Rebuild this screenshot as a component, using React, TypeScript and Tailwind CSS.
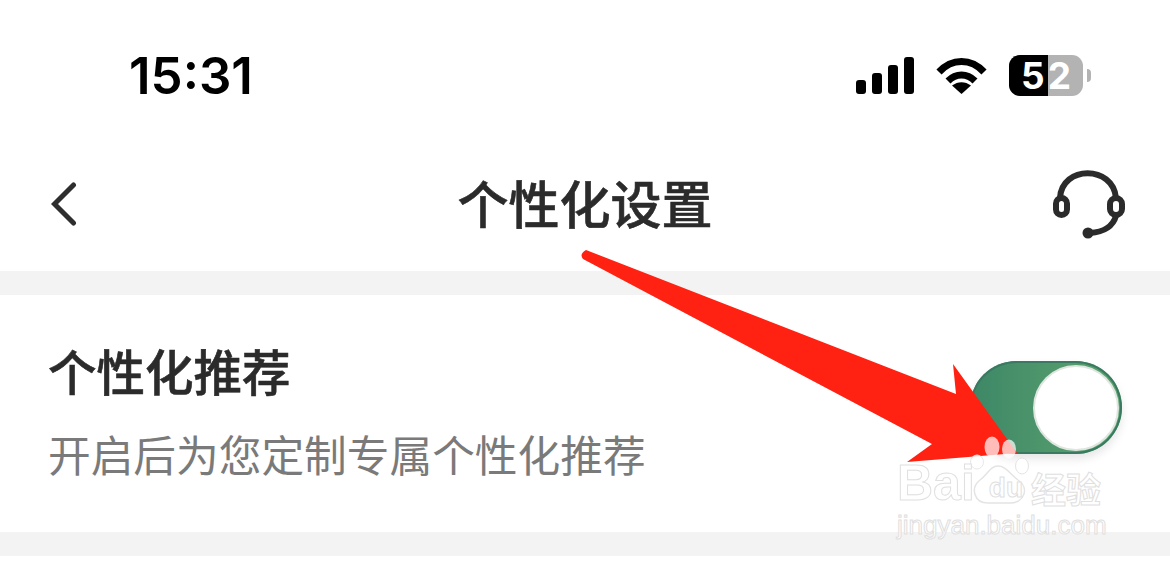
const cjk = "font-['Noto_Sans_CJK_SC','Noto_Sans',sans-serif]";

const SignalIcon = () => (
  <svg width="58" height="37" viewBox="0 0 58 37" fill="#000">
    <rect x="0" y="23" width="10" height="14" rx="3" />
    <rect x="16" y="16" width="10" height="21" rx="3" />
    <rect x="32" y="8" width="10" height="29" rx="3" />
    <rect x="48" y="0" width="10" height="37" rx="3" />
  </svg>
);

const WifiIcon = () => (
  <svg width="51" height="37" viewBox="0 0 51 37" fill="none" stroke="#000" strokeWidth="7">
    <path d="M3 15 C16 1 35 1 48 15" />
    <path d="M12 24 C20 16 31 16 39 24" />
    <path d="M25.5 37 L16 28.5 C22 24 29 24 35 28.5 Z" fill="#000" stroke="none" />
  </svg>
);

const BatteryIcon = () => (
  <div className="flex items-center">
    <div className="relative flex h-[41px] w-[74px] rounded-[11px] bg-[#b3b3b3]">
      <div className="h-full w-[39px] rounded-l-[11px] bg-black" />
      <span className="absolute inset-0 flex items-center justify-center pl-[3px] font-['Inter',sans-serif] text-[37px] font-bold leading-none tracking-[3px] text-white">
        52
      </span>
    </div>
    <div className="ml-1 h-[13px] w-1 rounded-r-full bg-[#b3b3b3]" />
  </div>
);

const BackIcon = () => (
  <svg width="26" height="44" viewBox="0 0 26 44" fill="none" stroke="#2e2e2e" strokeWidth="5" strokeLinecap="round" strokeLinejoin="miter">
    <path d="M22.5 3 L3.5 22 L22.5 41" />
  </svg>
);

const HeadsetIcon = () => (
  <svg width="78" height="74" viewBox="1050 168 78 74" fill="none" stroke="#2b2b2b" strokeWidth="6">
    <path d="M1060 198 C1062 165 1113 165 1116 198" />
    <rect x="1056" y="198" width="11" height="17" rx="5.5" />
    <rect x="1110" y="198" width="12" height="17" rx="6" />
    <path d="M1116 216 C1113 226 1104 232 1090 233" />
    <circle cx="1088" cy="233" r="5.5" fill="#2b2b2b" stroke="none" />
  </svg>
);

const RedArrow = () => (
  <svg className="absolute left-[575px] top-[245px]" width="450" height="225" viewBox="575 245 450 225">
    <path
      d="M586 250 L956 394 L953 364 L1017 453 L907 462 L932 444 L583 259 Q579 254 586 250 Z"
      fill="#ff2112"
    />
  </svg>
);

const Watermark = () => (
  <div className="absolute left-[897px] top-[436px] w-[214px]">
    {/* paw: viewBox is page coordinates so the pads line up with the picture */}
    <svg className="absolute left-[68px] top-0" width="70" height="70" viewBox="965 436 70 70" fill="none">
      <ellipse cx="992" cy="447" rx="7.5" ry="10.5" fill="#fff" fillOpacity="0.7" />
      <ellipse cx="1009" cy="449" rx="7" ry="9.5" fill="#fff" fillOpacity="0.7" />
      <ellipse cx="977" cy="462" rx="6.5" ry="7" fill="#fff" fillOpacity="0.8" stroke="#e8e8e8" />
      <ellipse cx="1022" cy="466" rx="6.5" ry="8" fill="#fff" stroke="#e4e4e4" />
      <path
        d="M998 466 C990 466 988 474 980 480 C970 488 974 503 988 503 C994 503 1002 503 1010 503 C1024 503 1030 488 1018 480 C1010 474 1006 466 998 466 Z"
        fill="#fff"
        stroke="#e4e4e4"
        strokeWidth="1.5"
      />
    </svg>
    <div className="relative mt-[24px] flex h-[46px] items-end whitespace-nowrap text-white [-webkit-text-stroke:1px_#e0e0e0]">
      <span className="font-['Liberation_Sans',sans-serif] text-[50px] font-bold leading-[46px]">Bai</span>
      <span className="mb-[4px] ml-[14px] font-['Liberation_Sans',sans-serif] text-[28px] font-bold leading-none">du</span>
      <span className={`${cjk} mb-[1px] ml-[8px] text-[35px] font-bold leading-none`}>经验</span>
    </div>
    <p className="relative mt-[4px] whitespace-nowrap font-['Liberation_Sans',sans-serif] text-[26px] leading-[30px] text-white [-webkit-text-stroke:1px_#e0e0e0]">
      jingyan.baidu.com
    </p>
  </div>
);

const Toggle = () => (
  <div className="flex h-[93px] w-[152px] items-center justify-end rounded-full bg-[linear-gradient(90deg,#3d8767,#5fa56f)] pr-[3px] shadow-[inset_0_0_0_2px_#3a7a62,0_5px_10px_rgba(0,0,0,0.1)]">
    <div className="h-[86px] w-[86px] rounded-full border-2 border-[#dfe5df] bg-white" />
  </div>
);

export default function App() {
  return (
    <div className={`${cjk} relative h-[562px] w-[1170px] overflow-hidden bg-white`}>
      <div className="flex h-[151px] items-start justify-between pl-[129px] pr-[79px] pt-[55px]">
        <span className="font-['Inter',sans-serif] text-[51px] font-semibold leading-[41px] text-black">15:31</span>
        <div className="flex items-center">
          <SignalIcon />
          <div className="ml-[22px]"><WifiIcon /></div>
          <div className="ml-[22px]"><BatteryIcon /></div>
        </div>
      </div>

      <header className="grid h-[120px] grid-cols-[1fr_auto_1fr] items-start px-[51px]">
        <div className="pt-[31px]"><BackIcon /></div>
        <h1 className="pt-[16px] text-[51px] font-medium leading-[70px] text-[#2b2b2b] [-webkit-text-stroke:0.6px_#2b2b2b]">个性化设置</h1>
        <div className="-mr-[9px] flex justify-end pt-[17px]"><HeadsetIcon /></div>
      </header>

      <div className="h-6 bg-[#f3f3f3]" />

      <section className="flex h-[237px] items-start justify-between pl-[48px] pr-[48px]">
        <div className="pt-[40px]">
          <h2 className="text-[48.5px] font-medium leading-[70px] text-[#2b2b2b] [-webkit-text-stroke:0.6px_#2b2b2b]">个性化推荐</h2>
          <p className="mt-[18px] text-[42.7px] leading-[60px] text-[#7a7a7a]">开启后为您定制专属个性化推荐</p>
        </div>
        <div className="pt-[66px]"><Toggle /></div>
      </section>

      <div className="h-6 bg-[#f3f3f3]" />

      <RedArrow />
      <Watermark />
    </div>
  );
}
